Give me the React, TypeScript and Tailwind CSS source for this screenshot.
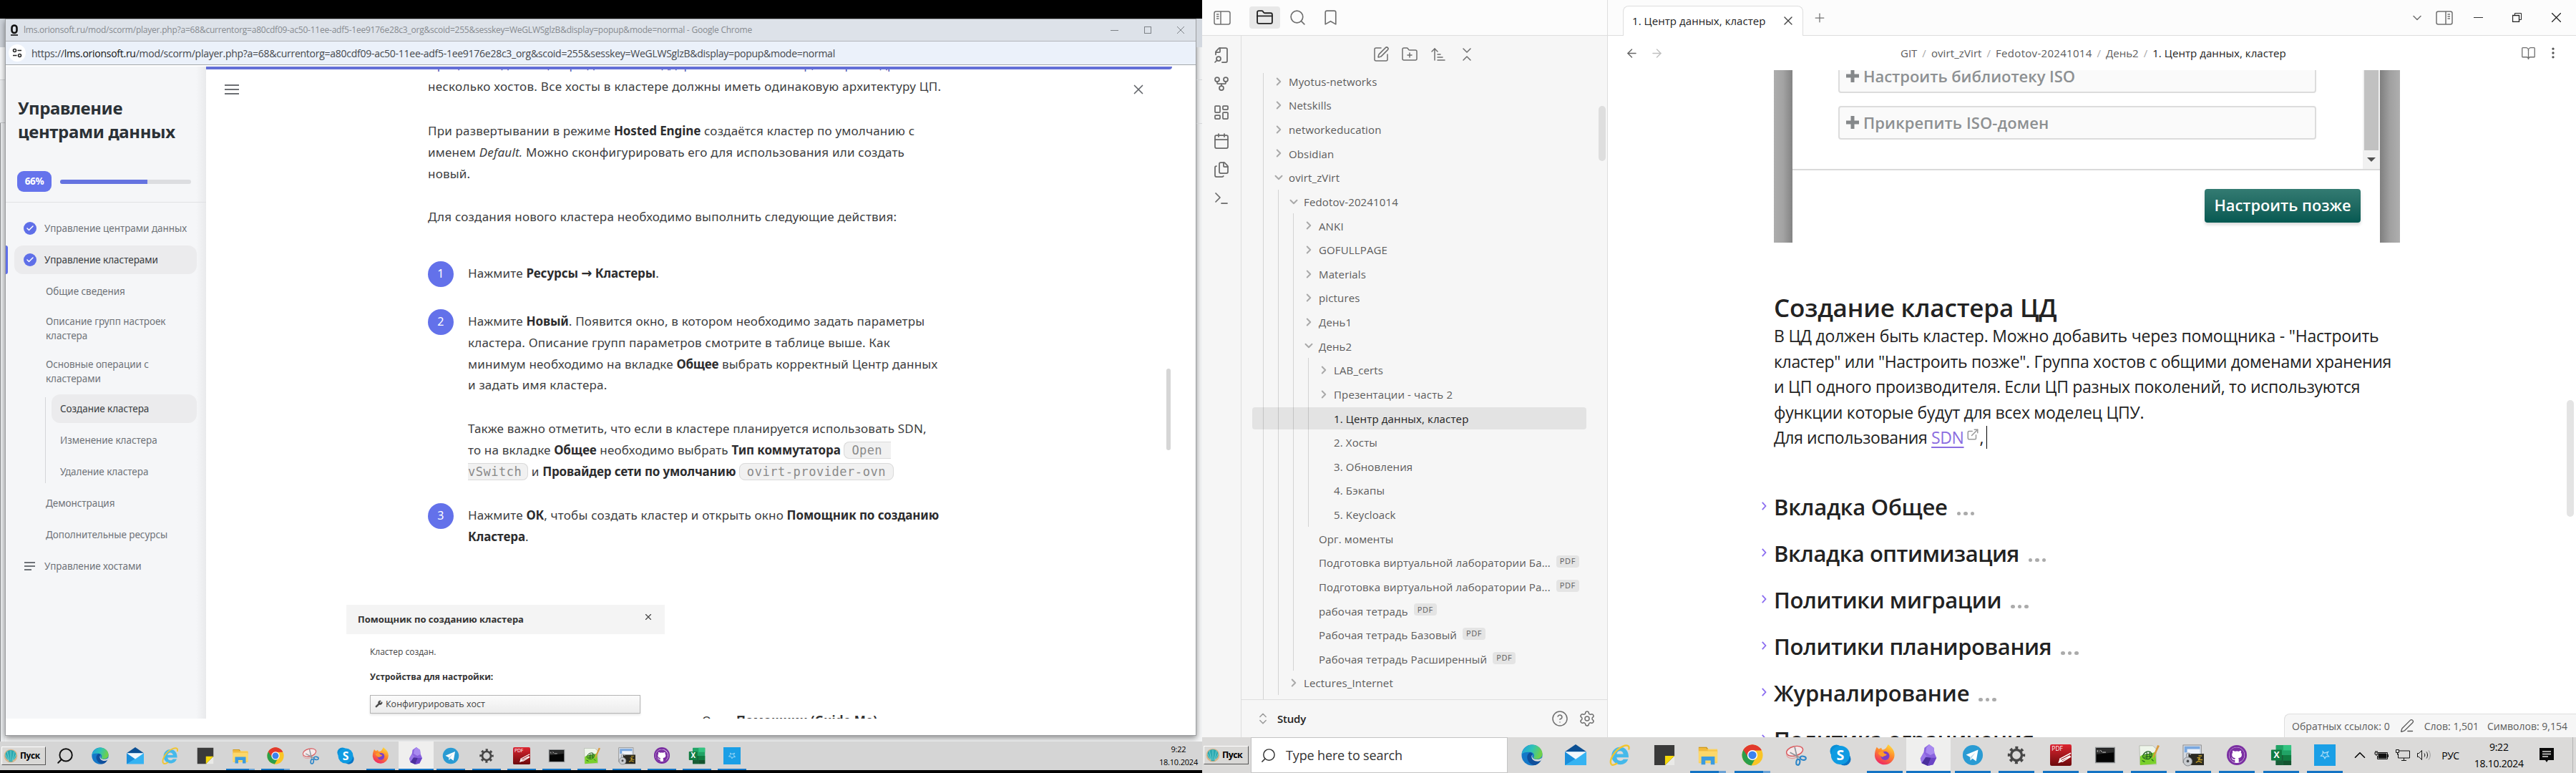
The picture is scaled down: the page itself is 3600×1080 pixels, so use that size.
import type { ReactNode } from "react";
import {
  ArrowLeft, ArrowRight, ArrowUpNarrowWide, BookOpen, Bookmark, Calendar, Check, ChevronDown, ChevronRight,
  ChevronsDownUp, ChevronsUpDown, ChevronUp, CircleHelp, ExternalLink, FileSearch2, Files, FolderClosed, FolderPlus,
  GitFork, LayoutDashboard, EllipsisVertical, PenLine, Plus, Search, Settings, SquarePen, Terminal, Wrench, X,
} from "lucide-react";
import { FaGithub } from "react-icons/fa";

/* ---------- application icons ---------- */

function Svg({ children }: { children: ReactNode }) {
  return <svg viewBox="0 0 32 32" className="size-full overflow-visible">{children}</svg>;
}

const EdgeIcon = () => (
  <Svg>
    <defs>
      <linearGradient id="edgeTop" x1="0" y1="0" x2="1" y2="0.3">
        <stop offset="0" stopColor="#1f9de0" />
        <stop offset="0.55" stopColor="#2fc3b5" />
        <stop offset="1" stopColor="#6fd04a" />
      </linearGradient>
    </defs>
    <circle cx="16" cy="16" r="15.5" fill="#1478c8" />
    <path d="M.6 14.5C2 5.500 9 .5 16 .5c9 0 15.500 6.500 15.500 13.500 0 5-4 8-9 8-3.500 0-5-1.500-4-3 1.500-2.500.5-7-5-7.500C7.500 11 2.500 12 .6 14.500z" fill="url(#edgeTop)" />
    <path d="M13 12c-4 2-5.500 7-3 12 2 4.500 7 7.500 11 7 4-1.500 7-4 8.500-7.500-5 2.500-13 1-14-5-.3-2 .7-3 1.500-4-1-1.500-2.500-2.500-4-2.500z" fill="#0f4f9c" />
    <path d="M17 15c-1.500 2-1.500 7 5 7.500 4 .2 7-.8 9-3-.3 2-1 4-1.600 4.500-6 3-13.500.500-14-5-.2-2 .6-3 1.600-4z" fill="#dcdbd9" />
  </Svg>
);
const MailIcon = () => (
  <Svg>
    <path d="M0 11 16 0l16 11v4H0z" fill="#0b4f93" />
    <path d="M0 11h32v20H0z" fill="#1f9ae6" />
    <path d="M0 31 32 11v20z" fill="#35b3f2" />
    <path d="M0 11v20l16-10z" fill="#1a8edb" />
    <path d="M0 11h32L16 22z" fill="#f2f7fb" />
  </Svg>
);
const IeIcon = () => (
  <Svg>
    <path fillRule="evenodd" d="M16 4C8.500 4 3.500 10 3.500 17S9 30 16.500 30c5.500 0 9.500-3 11.500-8h-7c-1 1.600-2.500 2.400-4.500 2.400-3.200 0-5.200-2-5.500-5h17.800C29 10 24 4 16 4zM11 14.500c.6-3 2.500-4.600 5-4.600s4.600 1.600 5 4.600z" fill="#45b9ea" />
    <path d="M3 30C-1 24 8 8 20 3c6-2.500 11-2 9 5" fill="none" stroke="#f2c52e" strokeWidth="2.500" />
    <path d="M3 30c2 1.500 6 0 9-2" fill="none" stroke="#f2c52e" strokeWidth="2.500" />
  </Svg>
);
const StickyIcon = () => (
  <Svg>
    <path d="M1 1h30v17L18 31H1z" fill="#3a3a3a" />
    <path d="M31 17v14H17z" fill="#e9e9e7" />
    <path d="M17 31V17h14z" fill="#f7d908" />
  </Svg>
);
const FolderIcon = () => (
  <Svg>
    <path d="M2 4h12l3 4H2z" fill="#c9920e" />
    <path d="M2 7h28v21H2z" fill="#fbd15c" />
    <path d="M2 5h11l3 4h14v4H2z" fill="#f0b93c" />
    <path d="M2 10h28v16H2z" fill="#fcd76b" />
    <path d="M6 30V18h20v12h-6v-6h-8v6z" fill="#3c9be0" />
  </Svg>
);
const ChromeIcon = () => (
  <Svg>
    <circle cx="16" cy="16" r="15.500" fill="#f9c526" />
    <path d="M16 16 2.600 8.200A15.500 15.500 0 0 1 29.400 8.200L29 9H16z" fill="#e2392c" />
    <path d="M16 16 2.600 8.200A15.500 15.500 0 0 0 14.500 31.400L21 20z" fill="#2a9f4b" />
    <path d="M2.600 8.200A15.500 15.500 0 0 1 29.400 8.200L16 9a7 7 0 0 0-6.500 10z" fill="#e2392c" />
    <circle cx="16" cy="16" r="7.600" fill="#fff" />
    <circle cx="16" cy="16" r="6" fill="#3b82ee" />
  </Svg>
);
const SnipIcon = () => (
  <Svg>
    <ellipse cx="14" cy="10" rx="12.500" ry="7" transform="rotate(-14 14 10)" fill="#f4e9ea" stroke="#d9585c" strokeWidth="1.500" />
    <path d="M2 14c-1 6 8 9 15 5" fill="none" stroke="#e79a9c" strokeWidth="1.200" />
    <path d="m7 12 15 8M14 4l4 17" stroke="#8e9299" strokeWidth="1.800" />
    <ellipse cx="19" cy="26.500" rx="2.700" ry="4.300" transform="rotate(10 19 26.500)" fill="none" stroke="#2d86c8" strokeWidth="2.200" />
    <ellipse cx="26.500" cy="20.500" rx="4.300" ry="2.700" transform="rotate(10 26.500 20.500)" fill="none" stroke="#2d86c8" strokeWidth="2.200" />
  </Svg>
);
const SkypeIcon = () => (
  <Svg>
    <circle cx="10" cy="10" r="9.500" fill="#0a8fd6" />
    <circle cx="22" cy="22" r="9.500" fill="#0a73c4" />
    <circle cx="16" cy="16" r="14" fill="#0e9be2" />
    <text x="16" y="23.500" textAnchor="middle" className="fill-white font-['Open_Sans'] text-[21px] font-bold">S</text>
  </Svg>
);
const FirefoxIcon = () => (
  <Svg>
    <defs>
      <linearGradient id="ffBody" x1="0.8" y1="0" x2="0.3" y2="1">
        <stop offset="0" stopColor="#ffdf3d" />
        <stop offset="0.45" stopColor="#ff8a2b" />
        <stop offset="1" stopColor="#ee2466" />
      </linearGradient>
    </defs>
    <path d="M21 0c3 3 9.500 7 9.500 16A14.800 14.800 0 0 1 1 17C1 12 2 8 4 4l3 3 4-2c0 2 1 3 2 3 4 0 6-4 8-8z" fill="url(#ffBody)" />
    <circle cx="16.500" cy="17" r="6.500" fill="#7a3fc9" />
    <path d="M6 13c3-3 8-3 9 0 1 1.500 3 1 4 2-1.500 3-5 2-6 4-3-1-5-3-7-6z" fill="#ff9a2c" />
  </Svg>
);
const ObsidianIcon = () => (
  <Svg>
    <path d="m17 0 7 5 1 8 3 7-5 10-8 2-9-4-2-7 5-9 1-7z" fill="#8a63de" />
    <path d="m17 0 7 5 1 8-6 3-7-4 1-7z" fill="#a98af0" />
    <path d="M9 12 4 21l2 7 8-9z" fill="#9a77e8" />
    <path d="m6 28 9 4 5-12-8-1z" fill="#4a2f9c" />
    <path d="m20 20 8 0-5 10-8 2z" fill="#6b45c6" />
  </Svg>
);
const TelegramIcon = () => (
  <Svg>
    <circle cx="16" cy="16" r="15" fill="#2a9bd3" />
    <path d="m6 15.500 18-7.500-3 17-5.500-4-3 3-.5-5z" fill="#fff" />
    <path d="m12 19 8-7-5.500 8-2 4z" fill="#bcdff0" />
  </Svg>
);
const GearIcon = () => (
  <Svg>
    <circle cx="16" cy="16" r="8" fill="none" stroke="#474747" strokeWidth="3.600" />
    <circle cx="16" cy="16" r="11" fill="none" stroke="#474747" strokeWidth="4" strokeDasharray="4.200 4.440" strokeDashoffset="2.100" />
  </Svg>
);
const PdfIcon = () => (
  <Svg>
    <defs>
      <linearGradient id="pdfBg" x1="0" y1="0" x2="0" y2="1">
        <stop offset="0" stopColor="#dd2430" />
        <stop offset="1" stopColor="#6d0a0c" />
      </linearGradient>
    </defs>
    <rect width="32" height="32" rx="2.500" fill="url(#pdfBg)" />
    <text x="2.500" y="9.500" className="fill-white font-['Open_Sans'] text-[9px]">PDF</text>
    <path d="m14 22 17-9M18 26l13-8M16 24l14-7" stroke="#fff" strokeWidth="1.800" fill="none" />
    <path d="m12 28 2.500-7 4.500 4.500z" fill="#fff" />
  </Svg>
);
const CmdIcon = () => (
  <Svg>
    <rect x="1" y="4" width="30" height="24" fill="#8f9295" />
    <rect x="2.500" y="5.500" width="27" height="21" fill="#050505" />
    <path d="M3 6h26v6L3 15z" fill="#2c2c2c" />
    <path d="M4.500 8.500v3M7 9v.8M7 11v.8M9 8.500l2 3M12 11.800h5" stroke="#d8d8d8" fill="none" />
  </Svg>
);
const NotepadIcon = () => (
  <Svg>
    <path d="M2 2h20l5 5v23H3z" fill="#eef5ea" stroke="#a9b0a6" strokeWidth="0.800" />
    <path d="M3 18c6-5 16-3 23-7l1 18-24 2z" fill="#7ad02c" />
    <path d="M8 15c3-5 10-6 12-2s-2 9-6 9-9-2-6-7zm1 1 11-2M9 19l10-1M13 12v10M17 11l1 10M6 24l4 2M20 22l3 3" fill="none" stroke="#1f5f20" strokeWidth="1.300" />
    <path d="m22 18 7-17 3 1-8 17-2 2z" fill="#d99a3c" />
  </Svg>
);
const WinScpIcon = () => (
  <Svg>
    <rect x="1" y="1" width="27" height="26" fill="#d6dbe2" stroke="#777" strokeWidth="0.800" />
    <rect x="3" y="3" width="23" height="9" fill="#79a8e0" />
    <rect x="7" y="7" width="19" height="8" fill="#eef2f7" />
    <rect x="9" y="14" width="23" height="17" fill="#2b2a22" />
    <path d="M24 17h5M22 20h4l-2 3h6M20 27l4-2 5 2" stroke="#c9a227" strokeWidth="1.500" fill="none" />
    <circle cx="8" cy="25.500" r="6.500" fill="#c9ccd0" stroke="#7d8084" />
    <path d="M6 19v-3a3 3 0 0 1 6 0" fill="none" stroke="#9da0a5" strokeWidth="1.500" />
    <circle cx="8" cy="25" r="2" fill="#4b4d50" />
  </Svg>
);
const GithubIcon = () => (
  <span className="flex size-full items-center justify-center">
    <span className="flex size-[94%] items-center justify-center rounded-full bg-[#7b2fa2]">
      <span className="flex size-[78%] items-center justify-center rounded-full bg-white">
        <FaGithub className="size-full text-[#7b2fa2]" />
      </span>
    </span>
  </span>
);
const ExcelIcon = () => (
  <Svg>
    <rect x="8" y="1" width="23" height="30" rx="1" fill="#21a366" />
    <path d="M19 1h12v8H19z" fill="#33c481" />
    <path d="M8 16h11v15H8z" fill="#185c37" />
    <path d="M19 16h12v8H19z" fill="#107c41" />
    <path d="M19 24h12v7H19z" fill="#14532f" />
    <rect x="1" y="8" width="16" height="16" rx="1" fill="#107c41" />
    <text x="9" y="20.500" textAnchor="middle" className="fill-white font-['Open_Sans'] text-[13px] font-bold">X</text>
  </Svg>
);
const TileIcon = () => (
  <Svg>
    <rect width="32" height="32" fill="#1a9fe6" />
    <path d="m13 10.500 2.500 2.500 5.500-2-2 3.500 3 3.500-4.500.3L16 21l-2-3.500-4-.3 3-3z" fill="none" stroke="#a9dcf7" strokeWidth="1.300" />
  </Svg>
);
const ShellIcon = () => (
  <Svg>
    <circle cx="16" cy="16" r="15" fill="#d8b48a" />
    <path d="M16 3c8 0 13 6 12 14-1 5-5 8-8 9v3h-8v-3c-3-1-7-4-8-9C3 9 8 3 16 3z" fill="#2aa8b0" />
    <path d="M16 27V4M13 27 8 6M19 27l5-21M11 26 4 13M21 26l7-13" stroke="#7fd8d6" strokeWidth="1.300" />
  </Svg>
);

type App = { icon: () => ReactNode; state: "idle" | "open" | "multi" | "active" };
const apps: App[] = [
  { icon: EdgeIcon, state: "idle" },
  { icon: MailIcon, state: "idle" },
  { icon: IeIcon, state: "idle" },
  { icon: StickyIcon, state: "idle" },
  { icon: FolderIcon, state: "multi" },
  { icon: ChromeIcon, state: "multi" },
  { icon: SnipIcon, state: "idle" },
  { icon: SkypeIcon, state: "idle" },
  { icon: FirefoxIcon, state: "open" },
  { icon: ObsidianIcon, state: "active" },
  { icon: TelegramIcon, state: "open" },
  { icon: GearIcon, state: "open" },
  { icon: PdfIcon, state: "open" },
  { icon: CmdIcon, state: "open" },
  { icon: NotepadIcon, state: "open" },
  { icon: WinScpIcon, state: "open" },
  { icon: GithubIcon, state: "open" },
  { icon: ExcelIcon, state: "open" },
  { icon: TileIcon, state: "open" },
];

function TaskButton({ app, large }: { app: App; large?: boolean }) {
  const Icon = app.icon;
  const active = app.state === "active";
  return (
    <div className={`relative flex h-full shrink-0 items-center justify-center ${large ? "w-[61.6px]" : "w-[49.1px]"} ${active ? "bg-[#efefee]" : ""}`}>
      <span className={large ? "size-[30px]" : "mb-px size-6"}><Icon /></span>
      {app.state !== "idle" && (
        <span className={`absolute bottom-0 flex ${large ? "h-[3px]" : "h-0.5"} ${active ? "w-full" : large ? "w-[50px]" : "w-10"}`}>
          <span className="flex-1 bg-[#1273c4]" />
          {app.state === "multi" && <span className={`bg-[#6ba3d6] ${large ? "w-2.5" : "w-2"}`} />}
        </span>
      )}
    </div>
  );
}

/* ---------- learning portal window ---------- */

const B = ({ children, t = "tracking-[-0.08px]" }: { children: ReactNode; t?: string }) => (
  <b className={`font-bold text-[#2c2c2e] ${t}`}>{children}</b>
);

function NavText({ children, two }: { children: ReactNode; two?: boolean }) {
  return (
    <div className={`flex items-center pl-[56px] ${two ? "h-[60px]" : "h-11"}`}>
      <span className="whitespace-nowrap leading-5">{children}</span>
    </div>
  );
}

function CourseNav() {
  return (
    <aside className="flex h-[911px] w-[280px] shrink-0 flex-col bg-[linear-gradient(90deg,#f5f6f8_0,#f5f6f8_95%,#e9eaec_100%)] font-['Noto_Sans','Open_Sans',sans-serif]">
      <h1 className="mt-[41px] ml-[17px] h-[66px] whitespace-nowrap text-[24px] leading-[33px] font-bold tracking-[-0.35px] text-[#2b3136]">
        Управление<br />центрами данных
      </h1>
      <div className="mt-[39px] ml-4 flex h-[29px] items-center gap-3">
        <span className="flex h-[29px] w-12 items-center justify-center rounded-[9px] bg-[#6573ec] text-[13.500px] font-bold tracking-[-0.300px] text-white">66%</span>
        <span className="flex h-1.5 w-[183px] overflow-hidden rounded-sm bg-[#dcdde0]"><span className="w-2/3 bg-[#6573e0]" /></span>
      </div>
      <div className="mt-3.5 h-px bg-[#e0e1e4]" />
      <nav className="mt-[14px] text-[13.500px] tracking-[-0.05px] text-[#6f7378]">
        <div className="flex h-11 items-center">
          <span className="mr-[11px] ml-[25px] flex size-[18px] items-center justify-center rounded-full bg-[#5f6fe8]"><Check className="size-3 text-white" strokeWidth={3} /></span>
          <span className="whitespace-nowrap">Управление центрами данных</span>
        </div>
        <div className="flex h-11 items-center">
          <span className="h-10 w-[3px] rounded-r-sm bg-[#5f6fe8]" />
          <div className="ml-[9px] flex h-10 w-[255px] items-center rounded-xl bg-[#ebebed]">
            <span className="mr-[11px] ml-[13px] flex size-[18px] items-center justify-center rounded-full bg-[#5f6fe8]"><Check className="size-3 text-white" strokeWidth={3} /></span>
            <span className="whitespace-nowrap text-[#3a3d42]">Управление кластерами</span>
          </div>
        </div>
        <NavText>Общие сведения</NavText>
        <NavText two>Описание групп настроек<br />кластера</NavText>
        <NavText two>Основные операции с<br />кластерами</NavText>
        <div className="relative">
          <span className="absolute top-[6px] left-[55px] h-[120px] w-px bg-[#d5d6d9]" />
          <div className="flex h-11 items-center pl-16">
            <span className="flex h-10 w-[203px] items-center rounded-xl bg-[#ebebed] pl-3 whitespace-nowrap text-[#3a3d42]">Создание кластера</span>
          </div>
          <div className="flex h-11 items-center pl-[76px]">Изменение кластера</div>
          <div className="flex h-11 items-center pl-[76px]">Удаление кластера</div>
        </div>
        <NavText>Демонстрация</NavText>
        <NavText>Дополнительные ресурсы</NavText>
        <div className="flex h-11 items-center">
          <span className="mr-[13px] ml-[26px] flex w-[15px] flex-col gap-[3.500px]">
            <span className="h-[1.500px] w-full bg-[#6f7378]" />
            <span className="h-[1.500px] w-full bg-[#6f7378]" />
            <span className="h-[1.500px] w-2.5 bg-[#6f7378]" />
          </span>
          Управление хостами
        </div>
      </nav>
    </aside>
  );
}

function Step({ n, children, gap }: { n: number; children: ReactNode; gap: string }) {
  return (
    <div className={`flex items-start ${gap}`}>
      <span className="-mt-0.5 flex size-9 shrink-0 items-center justify-center rounded-full bg-[#6371ea] text-[16px] text-white">{n}</span>
      <div className="ml-5 whitespace-nowrap">{children}</div>
    </div>
  );
}

function Lesson() {
  return (
    <section className="relative h-[911px] flex-1 overflow-hidden bg-white">
      <div className="h-1 w-[1350px] rounded-br bg-[#636fd6]" />
      <div className="flex h-[907px] justify-between overflow-hidden">
        <div className="mt-[21px] ml-[26px] flex h-3.5 w-5 shrink-0 flex-col justify-between">
          <span className="h-0.5 bg-[#6c6f73]" /><span className="h-0.5 bg-[#6c6f73]" /><span className="h-0.5 bg-[#6c6f73]" />
        </div>
        <div className="-mt-[22px] ml-[264px] w-[740px] shrink-0 font-['Noto_Sans','Open_Sans',sans-serif] text-[17px] leading-[29.750px] tracking-[0.200px] text-[#3d3e41]">
          <p className="h-[61px] whitespace-nowrap">
            <span className="block h-[30.500px] text-[#5258b4]">Процесс создания центра данных и поддержки хостов: кластер, который ядром</span>
            <span className="block tracking-[0.290px]">несколько хостов. Все хосты в кластере должны иметь одинаковую архитектуру ЦП.</span>
          </p>
          <p className="mt-8 whitespace-nowrap">
            При развертывании в режиме <B>Hosted Engine</B> создаётся кластер по умолчанию с<br />
            именем <i>Default.</i> Можно сконфигурировать его для использования или создать<br />новый.
          </p>
          <p className="mt-[31px] whitespace-nowrap">Для создания нового кластера необходимо выполнить следующие действия:</p>
          <Step n={1} gap="mt-[49px]">
            Нажмите <B>Ресурсы <span className="font-['DejaVu_Sans',sans-serif] text-[18px] leading-5">→</span> Кластеры</B>.
          </Step>
          <Step n={2} gap="mt-[33px]">
            Нажмите <B>Новый</B>. Появится окно, в котором необходимо задать параметры<br />
            кластера. Описание групп параметров смотрите в таблице выше. Как<br />
            минимум необходимо на вкладке <B t="tracking-[-0.200px]">Общее</B> выбрать корректный Центр данных<br />
            и задать имя кластера.
            <p className="mt-[31px]">
              Также важно отметить, что если в кластере планируется использовать SDN,<br />
              то на вкладке <B>Общее</B> необходимо выбрать <B>Тип коммутатора</B>{" "}
              <code className="rounded-l-lg border border-r-0 border-[#dadada] bg-[#f1f1f1] py-px pr-3 pl-2.5 font-['DejaVu_Sans_Mono',monospace] text-[17px] leading-5 tracking-[0.400px] text-[#8a8a8a]">Open</code><br />
              <code className="rounded-r-lg border border-l-0 border-[#dadada] bg-[#f1f1f1] py-px pr-2 font-['DejaVu_Sans_Mono',monospace] text-[17px] leading-5 tracking-[0.500px] text-[#8a8a8a]">vSwitch</code>
              {" "}и <B t="tracking-[-0.150px]">Провайдер сети по умолчанию</B>{" "}
              <code className="rounded-lg border border-[#dadada] bg-[#f1f1f1] px-2.5 py-px font-['DejaVu_Sans_Mono',monospace] text-[17px] leading-5 tracking-[0.550px] text-[#8a8a8a]">ovirt-provider-ovn</code>
            </p>
          </Step>
          <Step n={3} gap="mt-[32px]">
            Нажмите <B>ОК</B>, чтобы создать кластер и открыть окно <B>Помощник по созданию</B><br /><B>Кластера</B>.
          </Step>

          <div className="mt-[80px] -ml-[114px] flex font-['Open_Sans',sans-serif] text-[13px] leading-5 tracking-normal text-[#333]">
            <div className="w-[445px] shrink-0">
              <div className="flex h-[41px] items-center justify-between bg-[#f4f4f4] px-4">
                <span className="whitespace-nowrap font-bold">Помощник по созданию кластера</span>
                <X className="mb-1.5 size-[14px] text-[#444]" />
              </div>
              <div className="pl-[33px] text-[12px]">
                <div className="mt-[15px] text-[#444]">Кластер создан.</div>
                <div className="mt-[15px] font-bold">Устройства для настройки:</div>
                <div className="mt-[15px] flex h-[26px] w-[378px] items-center border border-[#b5b5b5] bg-linear-to-b from-[#fbfbfb] to-[#ececec] pl-1.5 text-[12.500px] text-[#444] shadow-[0_2px_3px_rgba(0,0,0,0.1)]">
                  <Wrench className="mr-1 size-[11px] fill-[#444]" strokeWidth={1.500} />Конфигурировать хост
                </div>
              </div>
            </div>
            <div className="mt-[147px] ml-[52px] h-[29px] whitespace-nowrap font-['Noto_Sans','Open_Sans',sans-serif] text-[17px] leading-[29px] tracking-[0.200px]">
              Окно <b>Помощник</b> <b>(Guide Me)</b>
            </div>
          </div>
        </div>
        <X className="mt-[17px] mr-[69px] ml-auto size-[22px] shrink-0 text-[#63666a]" strokeWidth={1.800} />
      </div>
      <span className="absolute top-[422px] left-[1342px] h-[114px] w-1.5 rounded bg-[#d6d6d6]" />
    </section>
  );
}

function PopupWindow() {
  return (
    <div className="flex h-[1002px] w-[1665px] shrink-0 flex-col border border-[#9c9ea1] bg-white shadow-[0_3px_8px_rgba(0,0,0,0.45)]">
      <div className="flex h-[30px] items-center bg-[#dde2e9] font-['Open_Sans',sans-serif] text-[12px] text-[#878b90]">
        <svg viewBox="0 0 10 16" className="mr-2 ml-[7px] h-4 w-2.5">
          <rect x="1.500" y="1.500" width="7" height="10.500" rx="3.500" fill="none" stroke="#111" strokeWidth="2.600" />
          <path d="M0 15h10" stroke="#111" strokeWidth="1.600" />
        </svg>
        <span className="whitespace-nowrap tracking-[-0.224px]">
          lms.orionsoft.ru/mod/scorm/player.php?a=68&amp;currentorg=a80cdf09-ac50-11ee-adf5-1ee9176e28c3_org&amp;scoid=255&amp;sesskey=WeGLWSglzB&amp;display=popup&amp;mode=normal - Google Chrome
        </span>
        <div className="mr-4 ml-auto flex items-center gap-9">
          <span className="h-px w-[11px] bg-[#7d8186]" />
          <span className="size-2.5 border border-[#7d8186]" />
          <svg viewBox="0 0 10 10" className="size-2.5"><path d="m0 0 10 10M10 0 0 10" stroke="#7d8186" /></svg>
        </div>
      </div>
      <div className="flex h-[34px] items-center border-t border-b border-t-[#b3b6ba] border-b-[#a5a8ab] bg-[#ebf1fa] font-['Open_Sans',sans-serif] text-[14px] text-[#44474c]">
        <span className="mr-2 ml-1 flex size-6 items-center justify-center rounded-full bg-white">
          <svg viewBox="0 0 14 14" className="size-3.5">
            <circle cx="3.500" cy="3.500" r="2" fill="none" stroke="#222" strokeWidth="1.500" />
            <circle cx="10.500" cy="10.500" r="2" fill="none" stroke="#222" strokeWidth="1.500" />
            <path d="M7.500 3.500H13M1 10.500h5.500" stroke="#222" strokeWidth="1.500" />
          </svg>
        </span>
        <span className="whitespace-nowrap tracking-[-0.266px]">
          https://<span className="text-[#111]">lms.orionsoft.ru</span>/mod/scorm/player.php?a=68&amp;currentorg=a80cdf09-ac50-11ee-adf5-1ee9176e28c3_org&amp;scoid=255&amp;sesskey=WeGLWSglzB&amp;display=popup&amp;mode=normal
        </span>
      </div>
      <div className="flex pt-0.5"><CourseNav /><Lesson /></div>
    </div>
  );
}

function LeftMonitor() {
  return (
    <div className="flex h-[1080px] w-[1680px] shrink-0 flex-col overflow-hidden bg-black">
      <div className="mt-[26px] flex h-[1010px] shrink-0 justify-between bg-[#f5f6f7]">
        <div className="flex w-[7px] shrink-0 flex-col bg-[#eceef0]">
          <span className="h-10 bg-[#cdd2d9]" /><span className="h-[46px] border-b border-[#d4d6d8] bg-[#f7f8f9]" />
          <span className="h-[60px] border-b border-[#c7c9cb]" /><span className="flex-1 border-l border-[#8d8f91]" />
        </div>
        <PopupWindow />
        <div className="flex w-2 shrink-0 flex-col">
          <span className="h-10 bg-[#d3d8df]" /><span className="h-[46px] border-b border-[#d4d6d8]" />
          <span className="h-[61px] border-b border-[#d4d6d8]" />
        </div>
      </div>
      <div className="relative z-10 flex h-10 shrink-0 items-center bg-[#d5d5d5]">
        <div className="mr-0.5 ml-0.5 flex h-[26px] w-[62px] items-center gap-[3px] border border-t-white border-r-[#555] border-b-[#555] border-l-white bg-[#d9d8d6] pl-0.5 font-['Open_Sans',sans-serif] text-[12px] font-bold tracking-[-0.400px] text-black">
          <span className="size-5"><ShellIcon /></span>Пуск
        </div>
        <div className="flex w-[49px] justify-center"><Search className="size-[26px] -scale-x-100 text-[#111]" strokeWidth={1.800} /></div>
        <div className="flex h-full">{apps.map((a, i) => <TaskButton key={i} app={a} />)}</div>
        <div className="mr-1.5 ml-auto flex flex-col items-center font-['Open_Sans',sans-serif] text-[11px] leading-[18px] tracking-[-0.200px] text-black">
          <span>9:22</span><span>18.10.2024</span>
        </div>
      </div>
    </div>
  );
}

/* ---------- notes application ---------- */

type Row = { t: string; l: number; k?: "open" | "closed"; pdf?: boolean; sel?: boolean };
const tree: Row[] = [
  { t: "Myotus-networks", l: 0, k: "closed" },
  { t: "Netskills", l: 0, k: "closed" },
  { t: "networkeducation", l: 0, k: "closed" },
  { t: "Obsidian", l: 0, k: "closed" },
  { t: "ovirt_zVirt", l: 0, k: "open" },
  { t: "Fedotov-20241014", l: 1, k: "open" },
  { t: "ANKI", l: 2, k: "closed" },
  { t: "GOFULLPAGE", l: 2, k: "closed" },
  { t: "Materials", l: 2, k: "closed" },
  { t: "pictures", l: 2, k: "closed" },
  { t: "День1", l: 2, k: "closed" },
  { t: "День2", l: 2, k: "open" },
  { t: "LAB_certs", l: 3, k: "closed" },
  { t: "Презентации - часть 2", l: 3, k: "closed" },
  { t: "1. Центр данных, кластер", l: 3, sel: true },
  { t: "2. Хосты", l: 3 },
  { t: "3. Обновления", l: 3 },
  { t: "4. Бэкапы", l: 3 },
  { t: "5. Keycloack", l: 3 },
  { t: "Орг. моменты", l: 2 },
  { t: "Подготовка виртуальной лаборатории Ба...", l: 2, pdf: true },
  { t: "Подготовка виртуальной лаборатории Ра...", l: 2, pdf: true },
  { t: "рабочая тетрадь", l: 2, pdf: true },
  { t: "Рабочая тетрадь Базовый", l: 2, pdf: true },
  { t: "Рабочая тетрадь Расширенный", l: 2, pdf: true },
  { t: "Lectures_Internet", l: 1, k: "closed" },
];

function TreeRow({ row }: { row: Row }) {
  const Chevron = row.k === "open" ? ChevronDown : ChevronRight;
  return (
    <div className="relative flex h-[33.640px] items-center pl-[15px]">
      {row.sel && <span className="absolute inset-x-0 inset-y-[1.300px] rounded bg-black/[0.075]" />}
      {Array.from({ length: row.l + 1 }, (_, i) => <span key={i} className="h-full w-[21px] shrink-0 border-l border-[#d3d3d3]" />)}
      <span className="mr-[5px] -ml-2 flex size-[18px] shrink-0 items-center justify-center">
        {row.k && <Chevron className="size-[18px] text-[#a9a9a9]" strokeWidth={2.600} />}
      </span>
      <span className={`relative whitespace-nowrap pt-px tracking-[0.140px] ${row.sel ? "text-[#222]" : ""}`}>{row.t}</span>
      {row.pdf && <span className="mb-[3px] ml-2 flex h-[17px] w-8 items-center justify-center rounded bg-[#e4e4e4] text-[11px] font-medium tracking-[0.600px]">PDF</span>}
    </div>
  );
}

function PanelIcon({ flip }: { flip?: boolean }) {
  return (
    <svg viewBox="0 0 24 20" className={`h-5 w-6 shrink-0 text-[#707070] ${flip ? "-scale-x-100" : ""}`} fill="none" stroke="currentColor" strokeWidth="1.500">
      <rect x="1" y="1" width="22" height="18" rx="2.500" />
      <path d="M10 1v18M4 5h3.500M4 8h3.500M4 11h3.500" />
    </svg>
  );
}

function NotesSidebar() {
  return (
    <div className="flex w-[567px] shrink-0 flex-col border-r border-[#dedede] bg-[#f6f6f6] font-['Open_Sans','Noto_Sans',sans-serif] text-[#5c5c5c]">
      <div className="flex h-[50px] shrink-0 items-center border-b border-[#dedede] bg-[#fcfcfc] text-[#707070]">
        <span className="mr-[26px] ml-4"><PanelIcon /></span>
        <span className="flex h-[31px] w-[43px] items-center justify-center rounded bg-[#e8e8e8]"><FolderClosed className="size-[25px] text-[#222]" strokeWidth={1.750} /></span>
        <Search className="ml-3 size-[25px]" strokeWidth={1.600} />
        <Bookmark className="ml-[21px] size-[25px]" strokeWidth={1.600} />
      </div>
      <div className="flex min-h-0 flex-1">
        <div className="flex w-[55px] shrink-0 flex-col items-center gap-4 border-r border-[#dedede] pt-[15px] text-[#6a6a6a]">
          <FileSearch2 className="size-6 -scale-x-100" strokeWidth={1.750} />
          <GitFork className="size-6" strokeWidth={1.750} />
          <LayoutDashboard className="size-6" strokeWidth={1.750} />
          <Calendar className="size-6" strokeWidth={1.750} />
          <Files className="size-6" strokeWidth={1.750} />
          <Terminal className="size-6" strokeWidth={1.750} />
        </div>
        <div className="flex min-w-0 flex-1 flex-col">
          <div className="flex h-[52px] items-center gap-4 pl-[183px] text-[#6f6f6f]">
            <SquarePen className="size-6" strokeWidth={1.500} />
            <FolderPlus className="size-6" strokeWidth={1.500} />
            <ArrowUpNarrowWide className="size-6" strokeWidth={1.500} />
            <ChevronsDownUp className="size-6" strokeWidth={1.500} />
          </div>
          <div className="flex h-[875px] overflow-hidden">
            <div className="-mt-[5.300px] ml-[15px] w-[467px] text-[15px]">
              {tree.map((r, i) => <TreeRow key={i} row={r} />)}
              <div className="ml-[15px] h-3 border-l border-[#d3d3d3]" />
            </div>
            <span className="mt-[46px] ml-[17px] h-[77px] w-2.5 rounded-full bg-[#dedede]" />
          </div>
          <div className="flex flex-1 items-center border-t border-[#dedede] text-[#6f6f6f]">
            <ChevronsUpDown className="ml-5 size-5 text-[#9a9a9a]" strokeWidth={1.800} />
            <span className="ml-2.5 text-[15px] font-semibold tracking-[-0.200px] text-[#222]">Study</span>
            <CircleHelp className="ml-auto size-6" strokeWidth={1.500} />
            <Settings className="mr-4 ml-[14px] size-6" strokeWidth={1.500} />
          </div>
        </div>
      </div>
    </div>
  );
}

const folded = [
  { t: "Вкладка Общее", c: "tracking-[-0.250px]" },
  { t: "Вкладка оптимизация", c: "tracking-[-0.480px]" },
  { t: "Политики миграции", c: "tracking-[-0.380px]" },
  { t: "Политики планирования", c: "tracking-[-0.410px]" },
  { t: "Журналирование", c: "tracking-[-0.140px]" },
  { t: "Политика ограничения", c: "tracking-[-0.300px]" },
];

function GreyButton({ children, cls, t }: { children: ReactNode; cls: string; t: string }) {
  return (
    <div className={`flex w-[668px] items-center rounded-sm border-2 border-[#dcdcdc] bg-[#fafafa] pl-[9px] ${cls}`}>
      <svg viewBox="0 0 18 18" className="mr-1.5 size-[18px]"><path d="M6.500 0h5v6.500H18v5h-6.500V18h-5v-6.500H0v-5h6.500z" fill="#85888a" /></svg>
      <span className={`whitespace-nowrap text-[22px] leading-[30px] font-semibold text-[#8d9092] ${t}`}>{children}</span>
    </div>
  );
}

function EmbeddedDialog() {
  return (
    <div className="flex h-[241px] w-[875px]">
      <div className="w-[26px] bg-linear-to-r from-[#adadad] via-[#a3a3a3] to-[#838383]" />
      <div className="flex flex-1 flex-col">
        <div className="flex h-[140px] justify-between border-b-2 border-[#dadada]">
          <div className="ml-[64px]">
            <GreyButton cls="h-[47px] -mt-[15px] pb-px" t="tracking-[-0.050px]">Настроить библиотеку ISO</GreyButton>
            <GreyButton cls="h-[47px] mt-[18px] pb-0.5" t="tracking-[0.100px]">Прикрепить ISO-домен</GreyButton>
          </div>
          <div className="flex w-6 flex-col items-center bg-[#f1f1f1]">
            <span className="h-28 w-5 bg-[#c1c1c1]" />
            <span className="mt-2.5 border-x-[6px] border-t-[6px] border-x-transparent border-t-[#505050]" />
          </div>
        </div>
        <div className="mt-[26px] mr-[27px] ml-auto flex h-[47px] w-[218px] items-center justify-center rounded-sm bg-linear-to-b from-[#337b72] to-[#045952] text-[21.800px] font-semibold whitespace-nowrap text-white shadow-[0_3px_4px_rgba(0,0,0,0.15)]">
          Настроить позже
        </div>
      </div>
      <div className="w-7 bg-linear-to-r from-[#7f7f7f] via-[#a0a0a0] to-[#afafaf]" />
    </div>
  );
}

function Editor() {
  return (
    <div className="flex min-w-0 flex-1 flex-col bg-white font-['Open_Sans','Noto_Sans',sans-serif]">
      <div className="flex h-[50px] shrink-0 bg-[#fcfcfc]">
        <span className="w-[21px] border-b border-[#dedede]" />
        <div className="mt-2 flex h-[42px] w-[252px] items-center rounded-t-lg border border-b-0 border-[#dedede] bg-white pl-3 text-[15px] tracking-[0.060px] text-[#222]">
          <span className="whitespace-nowrap">1. Центр данных, кластер</span>
          <X className="mr-2.5 mb-0.5 ml-auto size-5 text-[#444]" strokeWidth={1.600} />
        </div>
        <div className="flex flex-1 items-center border-b border-[#dedede] text-[#707070]">
          <Plus className="ml-[13px] size-5" strokeWidth={1.500} />
          <ChevronDown className="ml-auto size-5" strokeWidth={1.800} />
          <span className="ml-[16px]"><PanelIcon flip /></span>
          <span className="ml-[29px] h-px w-[13px] bg-[#333]" />
          <svg viewBox="0 0 13 13" className="ml-[41px] size-[13px]" fill="none" stroke="#222">
            <path d="M.5 3.500h9v9h-9z" strokeWidth="1.300" /><path d="M3.500 3.500v-3h9v9h-3" />
          </svg>
          <svg viewBox="0 0 13 13" className="mr-[21px] ml-[42px] size-[13px]"><path d="m0 0 13 13M13 0 0 13" stroke="#222" strokeWidth="1.300" /></svg>
        </div>
      </div>
      <div className="flex h-12 shrink-0 items-center text-[15px] text-[#5c5c5c]">
        <ArrowLeft className="ml-6 size-[19px] text-[#666]" strokeWidth={1.800} />
        <ArrowRight className="ml-4 size-[19px] text-[#c0c0c0]" strokeWidth={1.800} />
        <div className="ml-[331px] flex items-center gap-[7px] whitespace-nowrap pt-px">
          <span>GIT</span><span className="text-[#ababab]">/</span>
          <span className="tracking-[0.100px]">ovirt_zVirt</span><span className="text-[#ababab]">/</span>
          <span className="tracking-[0.300px]">Fedotov-20241014</span><span className="text-[#ababab]">/</span>
          <span>День2</span><span className="text-[#ababab]">/</span>
          <span className="tracking-[0.060px] text-[#222]">1. Центр данных, кластер</span>
        </div>
        <BookOpen className="ml-auto size-[21px] text-[#707070]" strokeWidth={1.500} />
        <EllipsisVertical className="mr-[22px] ml-[14px] size-5 text-[#555]" />
      </div>
      <div className="relative h-[932px] overflow-hidden pl-[232px]">
        <EmbeddedDialog />
        <h2 className="mt-[67px] text-[35px] leading-[48px] font-semibold tracking-[-0.200px] text-[#222]">Создание кластера ЦД</h2>
        <div className="-mt-[2px] whitespace-nowrap text-[23px] leading-[35.600px] text-[#222]">
          <div className="tracking-[-0.200px]">В ЦД должен быть кластер. Можно добавить через помощника - "Настроить</div>
          <div className="tracking-[-0.330px]">кластер" или "Настроить позже". Группа хостов с общими доменами хранения</div>
          <div className="tracking-[-0.280px]">и ЦП одного производителя. Если ЦП разных поколений, то используются</div>
          <div className="tracking-[-0.280px]">функции которые будут для всех моделец ЦПУ.</div>
          <div className="flex tracking-[-0.380px]">
            <span>Для использования&nbsp;</span>
            <span className="text-[#8b6ce0] underline decoration-2 underline-offset-4">SDN</span>
            <ExternalLink className="mt-1 mr-px ml-[3px] size-[18px] text-[#999]" strokeWidth={2} />
            <span>,</span>
            <span className="mt-px ml-[4px] h-8 w-px bg-black" />
          </div>
        </div>
        <div className="mt-[45.500px] -ml-[26px]">
          {folded.map((f) => (
            <div key={f.t} className="flex h-[65px] items-center whitespace-nowrap text-[31px] font-semibold text-[#222]">
              <svg viewBox="0 0 7 12" className="mr-2.5 mb-0.5 ml-[9px] h-3 w-[7px]"><path d="m.800.800 4.700 5.200L.800 11.200" fill="none" stroke="#8a6cf0" strokeWidth="1.800" /></svg>
              <span className={f.c}>{f.t}</span>
              <span className="ml-[13px] flex gap-1 self-center pt-[19px]">
                <i className="size-[5.500px] rounded-full bg-[#ababab]" /><i className="size-[5.500px] rounded-full bg-[#ababab]" /><i className="size-[5.500px] rounded-full bg-[#ababab]" />
              </span>
            </div>
          ))}
        </div>
        <span className="absolute top-[461px] right-[3px] h-[163px] w-2.5 rounded-full bg-[#e4e4e4]" />
        <div className="absolute right-0 bottom-0 flex h-[33px] w-[408px] items-center rounded-tl-lg border-t border-l border-[#dedede] bg-[#f6f6f6] pl-2.5 text-[14px] whitespace-nowrap text-[#5c5c5c]">
          <span className="tracking-[0.050px]">Обратных ссылок: 0</span>
          <PenLine className="mr-3.5 ml-3.5 size-[20px]" strokeWidth={1.600} />
          <span>Слов: 1,501</span>
          <span className="ml-3">Символов: 9,154</span>
        </div>
      </div>
    </div>
  );
}

function RightMonitor() {
  return (
    <div className="flex h-[1080px] w-[1920px] shrink-0 flex-col overflow-hidden">
      <div className="flex h-[1030px] shrink-0"><NotesSidebar /><Editor /></div>
      <div className="flex h-[50px] shrink-0 items-center bg-[#dbdad9] font-['Open_Sans',sans-serif] text-black">
        <div className="ml-0.5 flex h-[26px] w-[63px] items-center gap-[3px] border border-t-white border-r-[#555] border-b-[#555] border-l-white bg-[#d9d8d6] pl-0.5 text-[12.500px] font-bold tracking-[-0.600px]">
          <span className="size-5"><ShellIcon /></span>Пуск
        </div>
        <div className="ml-[3px] flex h-full w-[359px] items-center border border-[#c4c4c4] bg-white text-[18px] tracking-[-0.140px] text-[#333]">
          <Search className="mr-[13px] ml-3 size-[23px] -scale-x-100" strokeWidth={1.500} />Type here to search
        </div>
        <div className="ml-[3px] flex h-full">{apps.map((a, i) => <TaskButton key={i} app={a} large />)}</div>
        <div className="ml-[5px] flex items-center">
          <ChevronUp className="size-[26px]" strokeWidth={1.400} />
          <svg viewBox="0 0 20 14" className="ml-[7px] h-3.5 w-5" fill="none" stroke="#111">
            <path d="M5 3.500h13.500v9H4.500V8M19.500 6v4M1 3h4v3H1zM2 3V1M4 3V1M3 6v2" /><path d="M6 5h11v6H6z" fill="#111" />
          </svg>
          <svg viewBox="0 0 20 18" className="ml-2.5 h-[18px] w-5" fill="none" stroke="#111">
            <path d="M5 3h14.500v10H3.500V7M8 16.500h7M11.500 13v3.500M.5 1.500h4v4h-4zM2.500 5.500v3" />
          </svg>
          <svg viewBox="0 0 20 18" className="ml-2.5 h-[18px] w-5" fill="none" stroke="#111">
            <path d="M.5 6.500h2l4-4v13l-4-4h-2zM10 6.500c1 1.500 1 3.500 0 5M13 4.500c2 2.500 2 6.500 0 9" /><path d="M16 2.500c3 4 3 9 0 13" stroke="#999" />
          </svg>
          <span className="ml-[14px] w-[27px] text-[14px] tracking-[-0.500px]">РУС</span>
          <div className="ml-[18px] flex w-[70px] flex-col items-center text-[14px] leading-[23px] tracking-[-0.239px]"><span>9:22</span><span>18.10.2024</span></div>
          <svg viewBox="0 0 20 20" className="ml-[22px] size-5"><path d="M0 0h20v17h-8l-2 3-2-3H0z" fill="#0a0a0a" /><path d="M4 5h12M4 8.500h12M4 12h8" stroke="#dbdad9" strokeWidth="1.300" /></svg>
        </div>
        <span className="mr-1 ml-auto h-full w-px bg-[#b5b5b5]" />
      </div>
    </div>
  );
}

export default function App() {
  return (
    <div className="flex h-[1080px] w-[3600px] overflow-hidden bg-white">
      <LeftMonitor />
      <RightMonitor />
    </div>
  );
}
